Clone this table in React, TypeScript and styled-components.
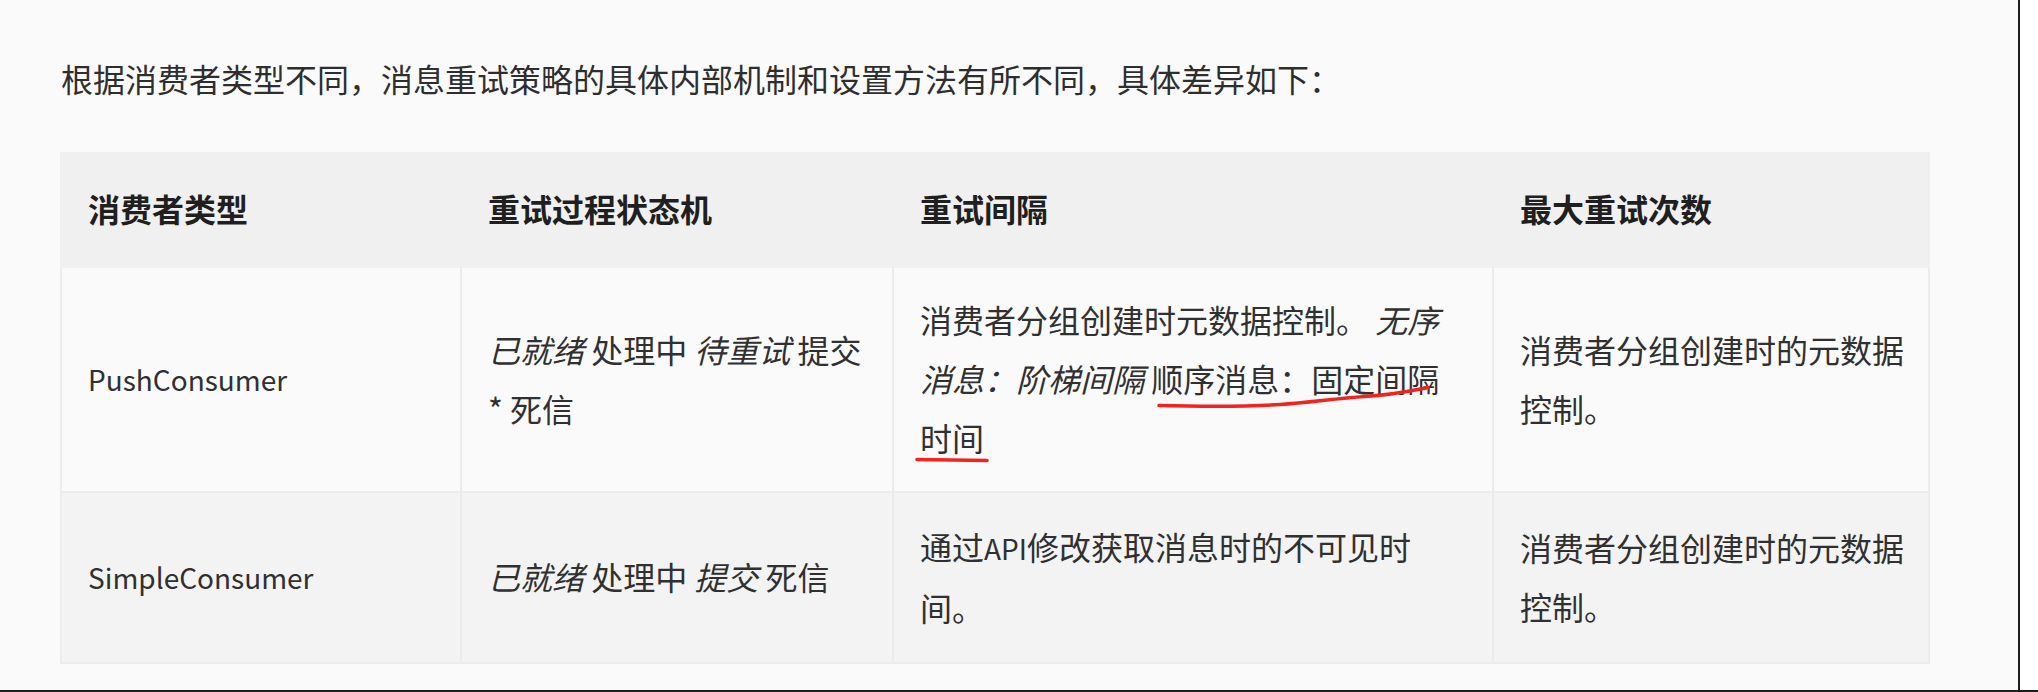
import React from "react";
import styled, { createGlobalStyle } from "styled-components";

const GlobalStyle = createGlobalStyle`
  html, body {
    margin: 0;
    padding: 0;
    background: #ffffff;
  }
  body {
    font-family: "Noto Sans CJK SC", "Noto Sans", sans-serif;
  }
`;

const Frame = styled.div`
  width: 2038px;
  height: 692px;
  box-sizing: border-box;
  display: flex;
  background: #ffffff;
  border-bottom: 2px solid #1c1c1c;
  overflow: hidden;
`;

const Canvas = styled.main`
  position: relative;
  width: 2020px;
  flex: none;
  box-sizing: border-box;
  border-right: 2px solid #1c1c1c;
  background: #fafafa;
  padding: 48px 0 0 60px;
`;

const Intro = styled.p`
  margin: 0;
  padding-left: 1px;
  font-size: 32px;
  line-height: 60px;
  color: #2e2e2e;
`;

const Table = styled.table`
  margin-top: 44px;
  width: 1868px;
  border-collapse: collapse;
  table-layout: fixed;
  font-size: 32px;
  line-height: 59px;
  color: #303030;
`;

const Col = styled.col<{ $w: number }>`
  width: ${(p) => p.$w}px;
`;

const Row = styled.tr<{ $h: number; $bg: string }>`
  height: ${(p) => p.$h}px;
  background: ${(p) => p.$bg};
`;

const HeadCell = styled.th`
  text-align: left;
  font-weight: 700;
  color: #1f1f1f;
  padding: 0 26px 4px 26px;
  border: 2px solid #f0f0f0;
  vertical-align: middle;
`;

const Cell = styled.td<{ $padRight?: number }>`
  padding: 0 ${(p) => p.$padRight ?? 26}px 2px 26px;
  border: 2px solid #ececec;
  vertical-align: middle;
  word-break: normal;
`;

const Latin = styled.span`
  font-size: 28px;
`;

const Em = styled.em`
  font-style: italic;
`;

const Marks = styled.svg`
  position: absolute;
  left: 0;
  top: 0;
  pointer-events: none;
`;

const columns = [400, 432, 600, 436];
const padRights = [26, 26, 34, 20];

type RowData = {
  h: number;
  bg: string;
  cells: React.ReactNode[];
};

const rows: RowData[] = [
  {
    h: 225,
    bg: "#fafafa",
    cells: [
      <Latin>PushConsumer</Latin>,
      <>
        <Em>已就绪</Em> 处理中 <Em>待重试</Em> 提交 * 死信
      </>,
      <>
        消费者分组创建时元数据控制。 <Em>无序消息：阶梯间隔</Em> 顺序消息：固定间隔时间
      </>,
      "消费者分组创建时的元数据控制。",
    ],
  },
  {
    h: 171,
    bg: "#f3f3f3",
    cells: [
      <Latin>SimpleConsumer</Latin>,
      <>
        <Em>已就绪</Em> 处理中 <Em>提交</Em> 死信
      </>,
      <>
        通过<Latin>API</Latin>修改获取消息时的不可见时间。
      </>,
      "消费者分组创建时的元数据控制。",
    ],
  },
];

export default function App() {
  return (
    <>
      <GlobalStyle />
      <Frame>
        <Canvas>
          <Intro>
            根据消费者类型不同，消息重试策略的具体内部机制和设置方法有所不同，具体差异如下：
          </Intro>
          <Table>
            <colgroup>
              {columns.map((w, i) => (
                <Col key={i} $w={w} />
              ))}
            </colgroup>
            <thead>
              <Row $h={114} $bg="#f0f0f0">
                <HeadCell>消费者类型</HeadCell>
                <HeadCell>重试过程状态机</HeadCell>
                <HeadCell>重试间隔</HeadCell>
                <HeadCell>最大重试次数</HeadCell>
              </Row>
            </thead>
            <tbody>
              {rows.map((r, ri) => (
                <Row key={ri} $h={r.h} $bg={r.bg}>
                  {r.cells.map((c, ci) => (
                    <Cell key={ci} $padRight={padRights[ci]}>
                      {c}
                    </Cell>
                  ))}
                </Row>
              ))}
            </tbody>
          </Table>
          <Marks width="2020" height="692" viewBox="0 0 2020 692">
            <path
              d="M1159 405.5 C 1200 406.5, 1250 406.5, 1280 404.5 S 1335 398.5, 1365 396.5 S 1405 392, 1428 387.5"
              fill="none"
              stroke="#f2231c"
              strokeWidth="3.5"
              strokeLinecap="round"
            />
            <path
              d="M917 459.5 L 987 460.5"
              fill="none"
              stroke="#f2231c"
              strokeWidth="3.5"
              strokeLinecap="round"
            />
          </Marks>
        </Canvas>
      </Frame>
    </>
  );
}
